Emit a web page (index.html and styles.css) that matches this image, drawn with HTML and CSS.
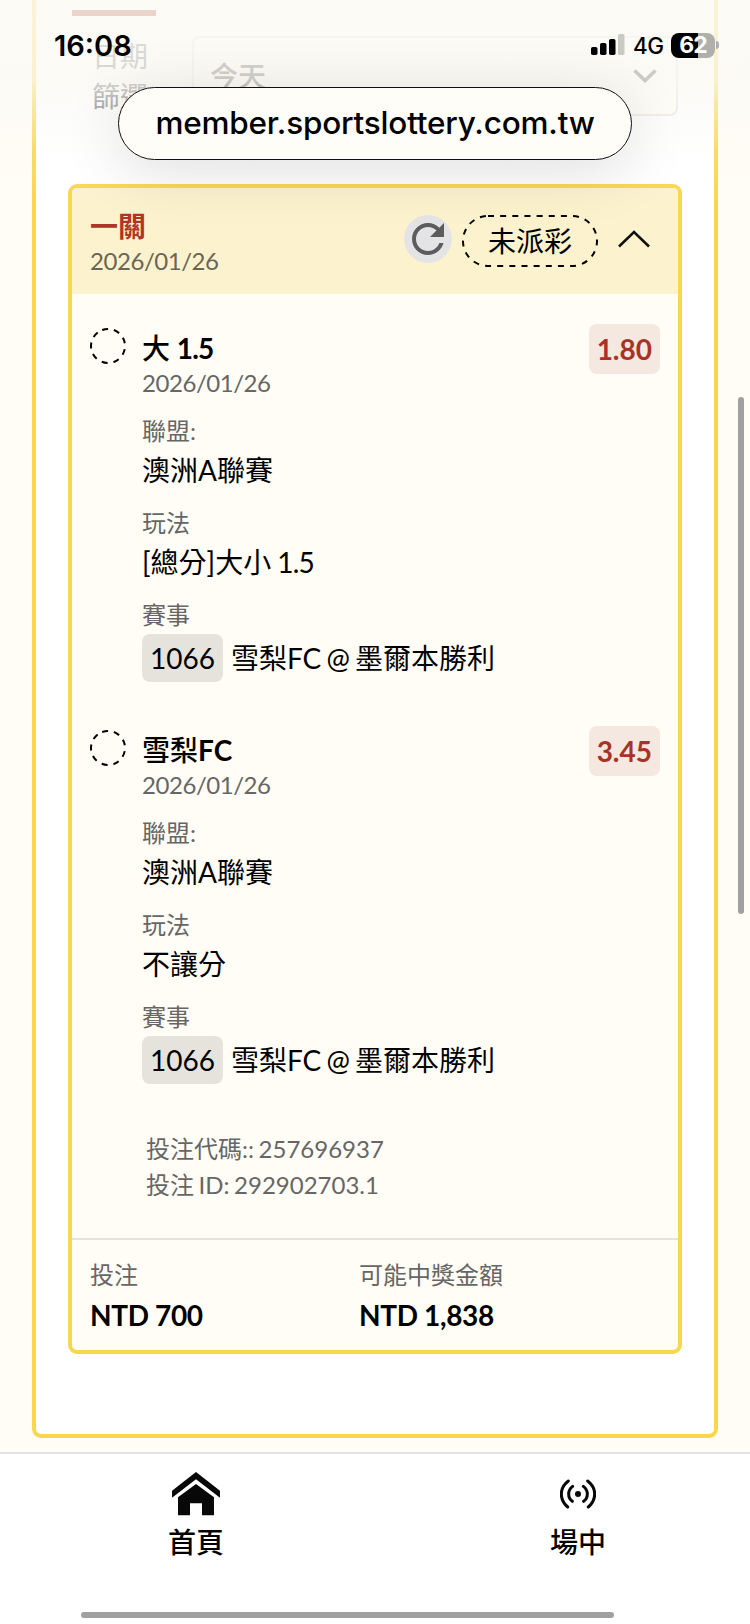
FILE: index.html
```html
<!DOCTYPE html>
<html lang="zh-Hant">
<head>
  <meta charset="UTF-8" />
  <title>投注紀錄</title>
  <link rel="stylesheet" href="styles.css">
</head>
<body>
  <div class="page">
    <main class="panel">
      <div class="tab-line"></div>

      <div class="filter">
        <span class="filter-label">日期<br>篩選</span>
        <div class="select">
          <span>今天</span>
          <svg width="24" height="14" viewBox="0 0 24 14" fill="none" stroke="#333" stroke-width="3.6"><path d="M1.5 1.5 12 11.5 22.5 1.5"/></svg>
        </div>
      </div>

      <section class="card">
        <header class="card-header">
          <div class="card-title">
            <h2>一關</h2>
            <p class="date">2026/01/26</p>
          </div>
          <button class="refresh">
            <svg width="48" height="48" viewBox="0 0 24 24" fill="#5c5c5c"><path d="M17.65 6.35C16.2 4.9 14.21 4 12 4c-4.42 0-7.99 3.58-7.99 8s3.57 8 7.99 8c3.73 0 6.84-2.55 7.73-6h-2.08c-.82 2.33-3.04 4-5.65 4-3.31 0-6-2.69-6-6s2.69-6 6-6c1.66 0 3.14.69 4.22 1.78L13 11h7V4l-2.35 2.35z"/></svg>
          </button>
          <span class="status-pill">
            <svg class="pill-line" width="136" height="52" viewBox="0 0 136 52" fill="none" stroke="#000" stroke-width="2"><rect x="1" y="1" width="134" height="50" rx="25" stroke-dasharray="6 6.15"/></svg>
            未派彩
          </span>
          <svg class="chevron" width="32" height="18" viewBox="0 0 32 18" fill="none" stroke="#111" stroke-width="2.6"><path d="M1 16.5 16 2 31 16.5"/></svg>
        </header>

        <article class="event">
          <svg class="ring" width="36" height="36" viewBox="0 0 36 36" fill="none" stroke="#000" stroke-width="2"><circle cx="18" cy="18" r="17" stroke-dasharray="6 5.87" transform="rotate(-110 18 18)"/></svg>
          <div class="event-body">
            <h3><span class="zh">大</span> <span class="num">1.5</span></h3>
            <p class="date">2026/01/26</p>
            <dl>
              <dt>聯盟:</dt>
              <dd>澳洲A聯賽</dd>
              <dt>玩法</dt>
              <dd>[總分]大小 <span class="num">1.5</span></dd>
              <dt>賽事</dt>
              <dd class="match"><span class="code">1066</span>雪梨FC @ 墨爾本勝利</dd>
            </dl>
          </div>
          <span class="odds">1.80</span>
        </article>

        <article class="event">
          <svg class="ring" width="36" height="36" viewBox="0 0 36 36" fill="none" stroke="#000" stroke-width="2"><circle cx="18" cy="18" r="17" stroke-dasharray="6 5.87" transform="rotate(-110 18 18)"/></svg>
          <div class="event-body">
            <h3><span class="zh">雪梨</span>FC</h3>
            <p class="date">2026/01/26</p>
            <dl>
              <dt>聯盟:</dt>
              <dd>澳洲A聯賽</dd>
              <dt>玩法</dt>
              <dd>不讓分</dd>
              <dt>賽事</dt>
              <dd class="match"><span class="code">1066</span>雪梨FC @ 墨爾本勝利</dd>
            </dl>
          </div>
          <span class="odds">3.45</span>
        </article>

        <div class="bet-ids">
          <p>投注代碼:: 257696937</p>
          <p>投注 ID: 292902703.1</p>
        </div>

        <footer class="totals">
          <div>
            <p class="total-label">投注</p>
            <p class="total-value">NTD 700</p>
          </div>
          <div>
            <p class="total-label">可能中獎金額</p>
            <p class="total-value">NTD 1,838</p>
          </div>
        </footer>
      </section>
    </main>

    <nav class="tabbar">
      <a class="tab">
        <span class="tab-icon">
          <svg width="48" height="43.3" viewBox="0 0 144 130" fill="#080808"><path d="M72 0 144 56V77L72 22 0 77V56z"/><path d="M72 36 126 76V130H90V94H54V130H18V76z"/></svg>
        </span>
        首頁
      </a>
      <a class="tab">
        <span class="tab-icon">
          <svg width="36" height="30" viewBox="0 0 108 90" fill="none" stroke="#080808" stroke-width="9" stroke-linecap="round"><path d="M25 6Q4 22 4 45T23 84M83 6Q104 22 104 45T85 84M38 22Q26 31 26 45T37 67M70 22Q82 31 82 45T71 67"/><circle cx="54" cy="45" r="9" fill="#080808" stroke="none"/></svg>
        </span>
        場中
      </a>
    </nav>
  </div>

  <!-- browser chrome over the page -->
  <div class="veil"></div>
  <div class="statusbar">
    <span class="clock">16:08</span>
    <svg class="signal" width="34" height="22" viewBox="0 0 34 22"><rect x="0" y="13" width="6.5" height="8" rx="1.8"/><rect x="9" y="9" width="6.5" height="12" rx="1.8"/><rect x="18" y="5" width="6.5" height="16" rx="1.8"/><rect x="27" y="0" width="6.5" height="21" rx="1.8" fill="#c9c9c5"/></svg>
    <span class="network">4G</span>
    <span class="battery">62</span>
    <span class="battery-tip"></span>
  </div>
  <div class="address">member.sportslottery.com.tw</div>
  <div class="scroll-y"></div>
  <div class="scroll-x"></div>
</body>
</html>
```
FILE: styles.css
```css
* {
  box-sizing: border-box;
}

body {
  margin: 0;
  position: relative;
  width: 750px;
  height: 1624px;
  overflow: hidden;
  background: #fffdf5;
  font-family: Lato, "Noto Sans CJK TC", sans-serif;
  font-size: 28px;
  color: #000;
}

h2, h3, p, dl, dd {
  margin: 0;
}

.page {
  display: flex;
  flex-direction: column;
  height: 1624px;
}

.panel {
  height: 1438px;
  margin: 0 32px 14px;
  padding: 10px 32px 0;
  background: #fff;
  border: 4px solid #f8d74f;
  border-top: none;
  border-radius: 0 0 9px 9px;
}

.tab-line {
  width: 84px;
  height: 6px;
  margin-left: 4px;
  background: #a9281e;
}

.filter {
  display: flex;
  justify-content: space-between;
  height: 99px;
  margin: 20px 4px 49px 20px;
}

.filter-label {
  width: 60px;
  line-height: 40px;
  text-align: right;
  color: #666;
}

.select {
  display: flex;
  align-items: center;
  justify-content: space-between;
  width: 486px;
  height: 80px;
  padding: 0 19px 0 16px;
  border: 2px solid #e6e6e4;
  border-radius: 8px;
  background: #fffef6;
  font-weight: 500;
  line-height: 36px;
  color: #444;
}

/* bet card */
.card {
  height: 1170px;
  background: #fffdf5;
  border: 4px solid #f8d74f;
  border-radius: 9px;
  overflow: hidden;
}

.card-header {
  display: flex;
  align-items: flex-start;
  height: 106px;
  padding: 20px 28px 0 18px;
  background: #fdf2ce;
}

.card-title {
  flex: 1;
}

h2 {
  font-size: 28px;
  font-weight: 700;
  line-height: 36px;
  color: #ae3527;
}

.date {
  font-size: 24px;
  line-height: 34px;
  letter-spacing: -.45px;
  color: #666;
}

.card-header .date {
  color: #6a6654;
}

.refresh {
  width: 48px;
  height: 48px;
  margin-top: 7px;
  padding: 0;
  border: none;
  border-radius: 50%;
  background: #e4e4e6;
}

.status-pill {
  position: relative;
  width: 136px;
  height: 52px;
  margin: 7px 20px 0 10px;
  line-height: 52px;
  text-align: center;
}

.pill-line {
  position: absolute;
  left: 0;
  top: 0;
}

.chevron {
  margin-top: 22px;
}

.event {
  display: flex;
  align-items: flex-start;
  height: 352px;
  margin: 36px 18px 50px;
}

.ring {
  margin-top: -2px;
}

.event-body {
  flex: 1;
  padding-left: 16px;
}

h3 {
  font-size: 28px;
  font-weight: 700;
  line-height: 36px;
}

.zh {
  font-weight: 500;
}

.num {
  letter-spacing: -.8px;
}

dl {
  margin-top: 14px;
}

dt {
  font-size: 24px;
  line-height: 34px;
  margin-bottom: 2px;
  color: #666;
}

dd {
  line-height: 40px;
  margin-bottom: 16px;
  word-spacing: -1px;
}

.match {
  display: flex;
  align-items: center;
  height: 48px;
  word-spacing: -2px;
}

.code {
  height: 48px;
  margin-right: 8px;
  padding: 0 8px;
  line-height: 48px;
  border-radius: 8px;
  background: #e6e3dd;
}

.odds {
  height: 50px;
  margin-top: -6px;
  padding: 0 8px;
  line-height: 50px;
  border-radius: 8px;
  background: #f5e8e0;
  color: #a93226;
  font-weight: 700;
}

.bet-ids {
  height: 107px;
  margin-top: -3px;
  padding-left: 74px;
  font-size: 24px;
  line-height: 36px;
  word-spacing: -1.6px;
  color: #666;
}

.totals {
  display: grid;
  grid-template-columns: 269px 1fr;
  padding: 17px 18px 0;
  border-top: 2px solid #e6e3dd;
}

.total-label {
  font-size: 24px;
  line-height: 36px;
  color: #666;
}

.total-value {
  margin-top: 2px;
  font-weight: 700;
  line-height: 40px;
  letter-spacing: -.35px;
}

/* bottom navigation */
.tabbar {
  display: flex;
  height: 172px;
  padding-left: 5px;
  border-top: 2px solid #e3e3e3;
  background: #fff;
}

.tab {
  flex: 0 0 382px;
  display: flex;
  flex-direction: column;
  align-items: center;
  padding-top: 16px;
  line-height: 36px;
  font-weight: 500;
}

.tab-icon {
  display: flex;
  align-items: center;
  height: 48px;
  margin-bottom: 6px;
}

.veil {
  position: absolute;
  inset: 0 0 auto;
  height: 200px;
  background: linear-gradient(rgba(251, 250, 244, .82) 0, rgba(250, 249, 243, .77) 80px, rgba(250, 249, 244, .5) 105px, rgba(251, 251, 249, .15) 150px, rgba(252, 252, 252, 0) 200px);
}

.statusbar {
  position: absolute;
  top: 29px;
  left: 54px;
  right: 31px;
  height: 32px;
  display: flex;
  align-items: center;
  font-family: Inter, sans-serif;
}

.clock {
  flex: 1;
  font-size: 29px;
  font-weight: 600;
}

.network {
  width: 38px;
  margin-left: 8px;
  font-size: 22.5px;
  font-weight: 500;
  letter-spacing: -.5px;
}

.battery {
  width: 44px;
  height: 25px;
  line-height: 25px;
  text-align: center;
  border-radius: 8px;
  background: linear-gradient(90deg, #000 62%, #b0b0ab 62%);
  color: #fff;
  font-size: 23px;
  font-weight: 700;
  letter-spacing: -1px;
}

.battery-tip {
  width: 3px;
  height: 8px;
  margin-left: 1px;
  border-radius: 0 3px 3px 0;
  background: #b0b0ab;
}

.address {
  position: absolute;
  top: 87px;
  left: 118px;
  width: 514px;
  height: 73px;
  line-height: 70px;
  text-align: center;
  border: 1.5px solid #111;
  border-radius: 37px;
  background: #fefdf8;
  box-shadow: 0 10px 60px rgba(0, 0, 0, .13);
  font-family: Inter, sans-serif;
  font-size: 31.5px;
  font-weight: 500;
  letter-spacing: -.2px;
}

.scroll-y {
  position: absolute;
  top: 397px;
  right: 6px;
  width: 6px;
  height: 517px;
  border-radius: 3px;
  background: #a0a0a0;
}

.scroll-x {
  position: absolute;
  left: 81px;
  bottom: 6px;
  width: 533px;
  height: 6px;
  border-radius: 3px;
  background: #a0a0a0;
}
```
